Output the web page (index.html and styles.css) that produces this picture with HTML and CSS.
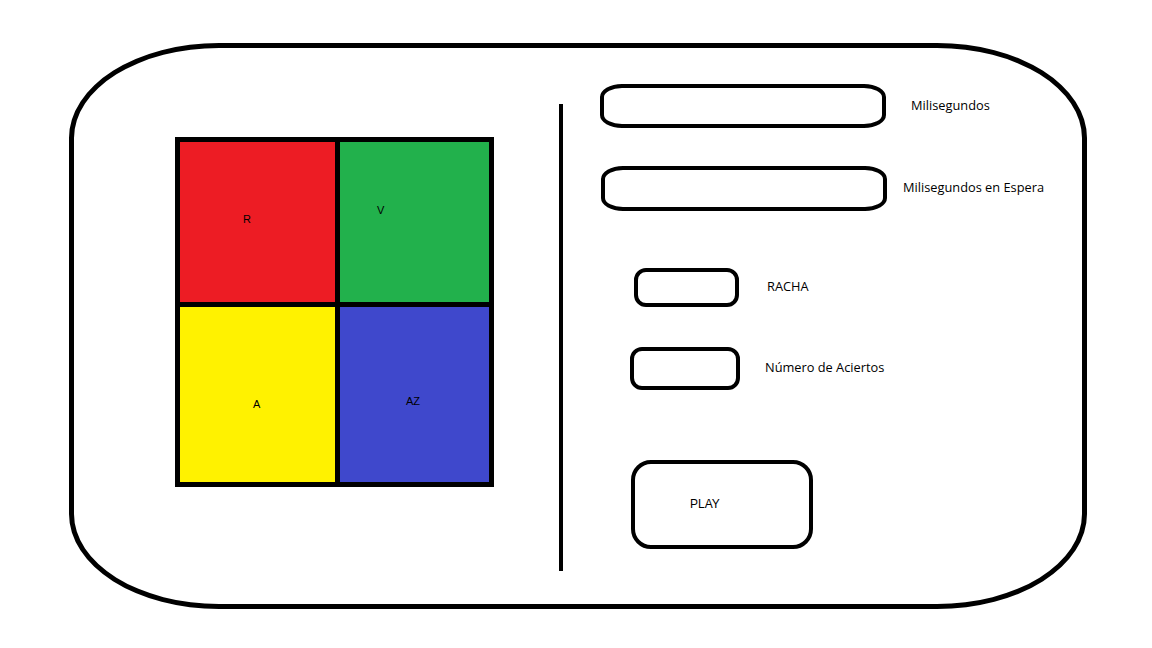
FILE: index.html
```html
<!DOCTYPE html>
<html lang="es">
<head>
  <meta charset="UTF-8">
  <title>Simon - Colores</title>
  <meta name="viewport" content="width=device-width, initial-scale=1">
  <link rel="stylesheet" href="styles.css">
</head>
<body>
  <div class="frame">
    <div class="board">
      <div class="cell red">R</div>
      <div class="cell green">V</div>
      <div class="cell yellow">A</div>
      <div class="cell blue">AZ</div>
    </div>
    <div class="divider"></div>
    <div class="panel">
      <div class="row row-ms">
        <div class="field field-wide"></div>
        <span class="label">Milisegundos</span>
      </div>
      <div class="row row-wait">
        <div class="field field-wide"></div>
        <span class="label">Milisegundos en Espera</span>
      </div>
      <div class="row row-streak">
        <div class="field field-small"></div>
        <span class="label">RACHA</span>
      </div>
      <div class="row row-hits">
        <div class="field field-small2"></div>
        <span class="label">Número de Aciertos</span>
      </div>
      <button class="play" type="button">PLAY</button>
    </div>
  </div>
</body>
</html>
```

FILE: styles.css
```css
body {
  background: #fff;
  font-family: "Open Sans", "Noto Sans", sans-serif;
  margin: 0;
  padding: 0;
}
.frame {
  box-sizing: border-box;
  width: 1018px;
  height: 566px;
  margin: 43px 0 0 69px;
  border: 5px solid #000;
  border-radius: 150px / 95px;
  display: flex;
  align-items: flex-start;
}
.board {
  margin: 89px 0 0 101px;
  display: grid;
  grid-template-columns: 155px 149px;
  grid-template-rows: 160px 175px;
  gap: 5px;
  padding: 5px;
  background: #000;
}
.cell {
  box-sizing: border-box;
  font-family: "Liberation Sans", Arial, sans-serif;
  font-size: 11px;
  line-height: 11px;
  color: #000;
}
.red { background: #ed1c24; padding: 72px 0 0 63px; }
.green { background: #22b14c; padding: 63px 0 0 37px; }
.yellow { background: #fff200; padding: 92px 0 0 73px; }
.blue { background: #3f48cc; padding: 89px 0 0 66px; }
.divider {
  width: 4px;
  height: 467px;
  margin: 56px 0 0 65px;
  background: #000;
}
.panel {
  display: flex;
  flex-direction: column;
  align-items: flex-start;
  margin: 36px 0 0 37px;
}
.row {
  display: flex;
  align-items: center;
}
.field {
  box-sizing: border-box;
  border: 4px solid #000;
}
.label {
  font-size: 12.8px;
  color: #000;
  padding-bottom: 3px;
}
.field-wide {
  width: 286px;
  height: 44px;
  border-radius: 22px / 13px;
}
.field-small {
  width: 105px;
  height: 39px;
  border-radius: 12px;
}
.field-small2 {
  width: 110px;
  height: 43px;
  border-radius: 12px;
}
.row-ms .label { margin-left: 25px; }
.row-wait { margin: 38px 0 0 1px; }
.row-wait .field { height: 45px; }
.row-wait .label { margin-left: 16px; }
.row-streak { margin: 57px 0 0 34px; }
.row-streak .label { margin-left: 28px; }
.row-hits { margin: 40px 0 0 30px; }
.row-hits .label { margin-left: 25px; }
.play {
  box-sizing: border-box;
  width: 182px;
  height: 89px;
  margin: 70px 0 0 31px;
  border: 4px solid #000;
  border-radius: 20px;
  background: #fff;
  font-family: "Liberation Sans", Arial, sans-serif;
  font-size: 12px;
  color: #000;
  text-align: left;
  padding: 0 0 2px 55px;
}
```
